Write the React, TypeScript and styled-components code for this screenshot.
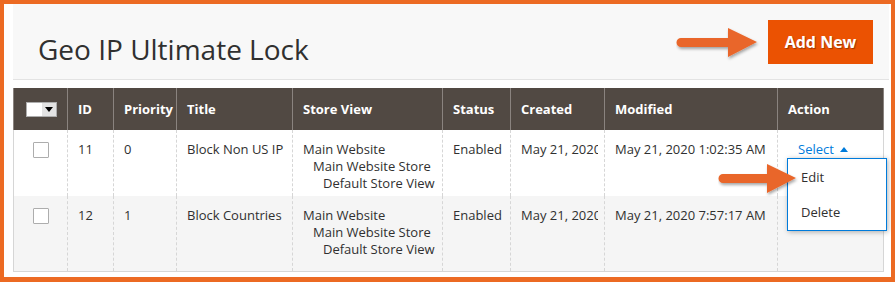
import styled, { createGlobalStyle } from "styled-components";

const GlobalStyle = createGlobalStyle`
  html, body {
    margin: 0;
    padding: 0;
    background: #fff;
  }
  body {
    font-family: "Open Sans", "Liberation Sans", sans-serif;
    color: #303030;
  }
`;

type Row = {
  id: number;
  priority: number;
  title: string;
  stores: string[];
  status: string;
  created: string;
  modified: string;
  height: number;
  striped?: boolean;
  showSelect?: boolean;
};

const rows: Row[] = [
  {
    id: 11,
    priority: 0,
    title: "Block Non US IP",
    stores: ["Main Website", "Main Website Store", "Default Store View"],
    status: "Enabled",
    created: "May 21, 2020 1:02:35 AM",
    modified: "May 21, 2020 1:02:35 AM",
    height: 66,
    showSelect: true,
  },
  {
    id: 12,
    priority: 1,
    title: "Block Countries",
    stores: ["Main Website", "Main Website Store", "Default Store View"],
    status: "Enabled",
    created: "May 21, 2020 7:57:17 AM",
    modified: "May 21, 2020 7:57:17 AM",
    height: 75,
    striped: true,
  },
];

const columns = [
  { label: "", width: 54 },
  { label: "ID", width: 46 },
  { label: "Priority", width: 63 },
  { label: "Title", width: 116 },
  { label: "Store View", width: 150 },
  { label: "Status", width: 68 },
  { label: "Created", width: 94 },
  { label: "Modified", width: 173 },
  { label: "Action", width: 106 },
];

// orange call-out arrow with a soft drop shadow
const Arrow = ({ width }: { width: number }) => (
  <svg width={width} height={36} viewBox={`0 0 ${width} 36`}>
    <defs>
      <filter id={`sh${width}`} x="-10%" y="-20%" width="130%" height="160%">
        <feDropShadow dx="1" dy="2" stdDeviation="1.5" floodColor="#000" floodOpacity="0.35" />
      </filter>
    </defs>
    <g filter={`url(#sh${width})`}>
      <path
        d={`M5 12 L${width - 32} 12 L${width - 32} 2 L${width - 3} 16 L${width - 32} 31 L${width - 32} 21 L5 21 A4.5 4.5 0 0 1 5 12 Z`}
        fill="#e9662a"
      />
    </g>
  </svg>
);

export default function App() {
  return (
    <>
      <GlobalStyle />
      <Frame>
        <PageHeader>
          <Title>Geo IP Ultimate Lock</Title>
          <AddNew>Add New</AddNew>
          <HeaderArrow>
            <Arrow width={84} />
          </HeaderArrow>
        </PageHeader>
        <GridWrap>
          <Grid>
            <colgroup>
              {columns.map((c, i) => (
                <col key={i} style={{ width: c.width }} />
              ))}
            </colgroup>
            <thead>
              <tr>
                {columns.map((c, i) => (
                  <Th key={i}>
                    {i === 0 ? (
                      <MassSelect>
                        <MassBox />
                        <MassToggle>
                          <DownCaret />
                        </MassToggle>
                      </MassSelect>
                    ) : (
                      c.label
                    )}
                  </Th>
                ))}
              </tr>
            </thead>
            <tbody>
              {rows.map((r) => (
                <Tr key={r.id} $striped={r.striped} style={{ height: r.height }}>
                  <Td $center>
                    <Check />
                  </Td>
                  <Td>{r.id}</Td>
                  <Td>{r.priority}</Td>
                  <Td>{r.title}</Td>
                  <Td>
                    {r.stores.map((s, i) => (
                      <StoreLine key={s} $level={i}>
                        {s}
                      </StoreLine>
                    ))}
                  </Td>
                  <Td>{r.status}</Td>
                  <Td>
                    <Clip>{r.created}</Clip>
                  </Td>
                  <Td>{r.modified}</Td>
                  <Td>
                    {r.showSelect && (
                      <ActionWrap>
                        <SelectLink>
                          Select <UpCaret />
                        </SelectLink>
                        <Menu>
                          <MenuItem>Edit</MenuItem>
                          <MenuItem>Delete</MenuItem>
                        </Menu>
                        <MenuArrow>
                          <Arrow width={81} />
                        </MenuArrow>
                      </ActionWrap>
                    )}
                  </Td>
                </Tr>
              ))}
            </tbody>
          </Grid>
        </GridWrap>
      </Frame>
    </>
  );
}

const Frame = styled.div`
  box-sizing: border-box;
  width: 895px;
  height: 282px;
  border: 4px solid #ec6a23;
  border-bottom-width: 5px;
  padding: 0 2px 0 9px;
  background: #fff;
  overflow: hidden;
`;

const PageHeader = styled.div`
  position: relative;
  box-sizing: border-box;
  height: 76px;
  background: #f8f8f8;
  border-bottom: 1px solid #e3e3e3;
  display: flex;
  justify-content: space-between;
  align-items: flex-start;
  padding: 0 16px 0 25px;
`;

const Title = styled.h1`
  margin: 26px 0 0;
  font-size: 28px;
  font-weight: 400;
  line-height: 38px;
  color: #303030;
`;

const AddNew = styled.button`
  margin-top: 16px;
  width: 105px;
  height: 44px;
  border: none;
  background: #eb5202;
  color: #fff;
  font-family: "Open Sans", "Liberation Sans", sans-serif;
  font-size: 16px;
  font-weight: 700;
  text-shadow: 1px 1px 1px rgba(0, 0, 0, 0.35);
  padding: 0;
`;

const HeaderArrow = styled.div`
  position: absolute;
  left: 663px;
  top: 22px;
  line-height: 0;
`;

const GridWrap = styled.div`
  margin-top: 8px;
  width: 870px;
`;

const Grid = styled.table`
  width: 870px;
  table-layout: fixed;
  border-collapse: collapse;
  font-size: 13px;
`;

const Th = styled.th`
  height: 42px;
  box-sizing: border-box;
  background: #514943;
  color: #fff;
  font-weight: 700;
  font-size: 13px;
  text-align: left;
  padding: 0 10px;
  border-left: 1px solid #8a837f;
  border-right: 1px solid #8a837f;
  white-space: nowrap;
  &:first-child {
    padding: 0 0 0 12px;
  }
`;

const MassSelect = styled.div`
  display: flex;
  width: 31px;
  height: 15px;
  border: 1px solid #adadad;
  box-sizing: border-box;
`;

const MassBox = styled.div`
  width: 15px;
  background: #fff;
`;

const MassToggle = styled.div`
  flex: 1;
  background: #e3e3e3;
  display: flex;
  align-items: center;
  justify-content: center;
`;

const DownCaret = styled.span`
  width: 0;
  height: 0;
  border-left: 4px solid transparent;
  border-right: 4px solid transparent;
  border-top: 5px solid #000;
`;

const Tr = styled.tr<{ $striped?: boolean }>`
  background: ${(p) => (p.$striped ? "#f5f5f5" : "#fff")};
  &:last-child td {
    border-bottom: 1px solid #d6d6d6;
  }
`;

const Td = styled.td<{ $center?: boolean }>`
  vertical-align: top;
  padding: ${(p) => (p.$center ? "12px 0 0 19px" : "11px 10px 0")};
  border-left: 1px dashed #d6d6d6;
  border-right: 1px dashed #d6d6d6;
  line-height: 17px;
  color: #303030;
  white-space: nowrap;
  &:first-child {
    border-left: 1px solid #d6d6d6;
  }
  &:last-child {
    border-right: 1px solid #d6d6d6;
  }
`;

const Check = styled.div`
  width: 16px;
  height: 16px;
  box-sizing: border-box;
  border: 1px solid #adadad;
  border-radius: 1px;
  background: #fff;
`;

const StoreLine = styled.div<{ $level: number }>`
  padding-left: ${(p) => p.$level * 10}px;
`;

const Clip = styled.div`
  overflow: hidden;
  width: 77px;
`;

const ActionWrap = styled.div`
  position: relative;
  padding-left: 10px;
`;

const SelectLink = styled.span`
  color: #007bdb;
  display: inline-flex;
  align-items: center;
  gap: 6px;
`;

const UpCaret = styled.span`
  width: 0;
  height: 0;
  border-left: 4px solid transparent;
  border-right: 4px solid transparent;
  border-bottom: 5px solid #007bdb;
`;

const Menu = styled.ul`
  position: absolute;
  z-index: 2;
  left: -1px;
  top: 17px;
  width: 100px;
  box-sizing: border-box;
  margin: 0;
  padding: 1px 0 0;
  list-style: none;
  background: #fff;
  border: 1px solid #007bdb;
  box-shadow: 1px 1px 5px rgba(0, 0, 0, 0.3);
`;

const MenuItem = styled.li`
  padding: 9px 13px;
  line-height: 17px;
  color: #303030;
`;

const MenuArrow = styled.div`
  position: absolute;
  z-index: 3;
  left: -70px;
  top: 21px;
  line-height: 0;
`;
